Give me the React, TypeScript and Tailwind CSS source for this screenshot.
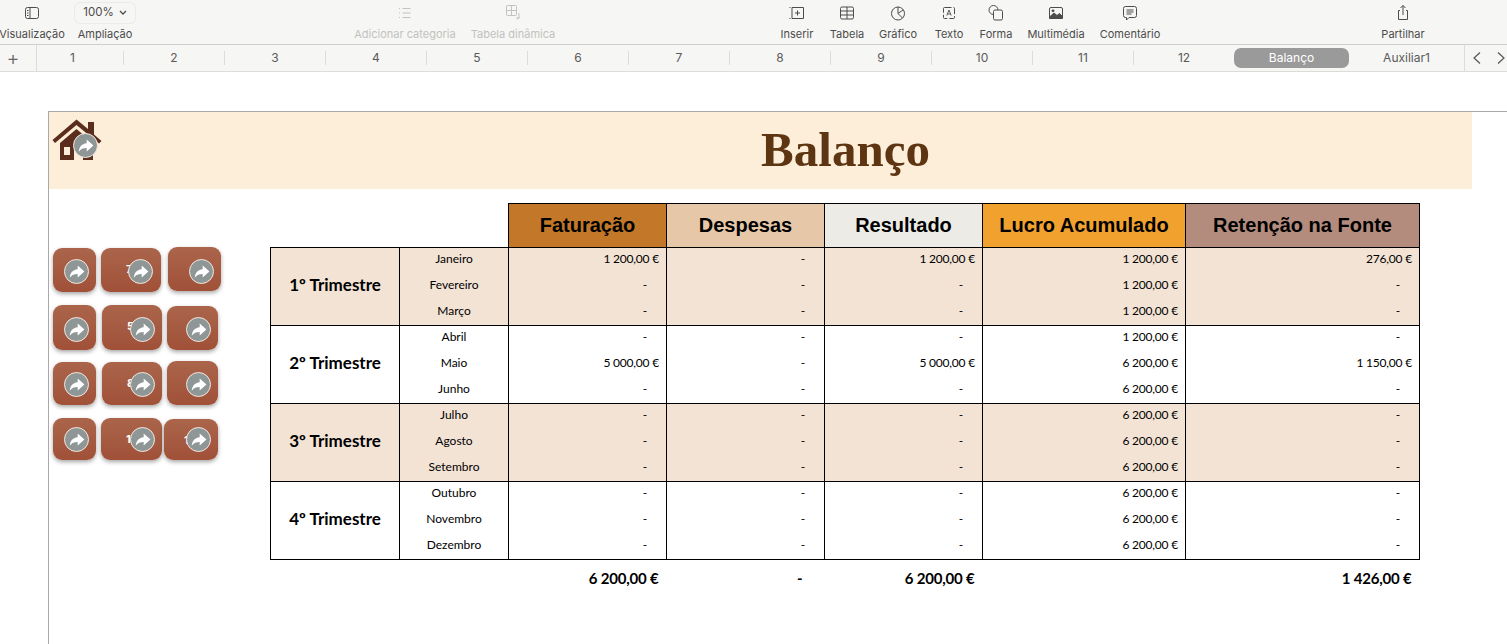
import type { ReactNode } from "react"

const tools1 = [
  { label: "Adicionar categoria", width: 116, icon: <ListIcon /> },
  { label: "Tabela dinâmica", width: 100, icon: <PivotIcon /> },
]

const tools2 = [
  { label: "Inserir", width: 50, icon: <InsertIcon /> },
  { label: "Tabela", width: 50, icon: <TableIcon /> },
  { label: "Gráfico", width: 52, icon: <ChartIcon /> },
  { label: "Texto", width: 50, icon: <TextIcon /> },
  { label: "Forma", width: 44, icon: <ShapeIcon /> },
  { label: "Multimédia", width: 76, icon: <MediaIcon /> },
  { label: "Comentário", width: 72, icon: <CommentIcon /> },
]

const tabs = ["2", "3", "4", "5", "6", "7", "8", "9", "10", "11"]

const quarters = [
  {
    name: "1º Trimestre",
    shaded: true,
    rows: [
      ["Janeiro", "1 200,00 €", "-", "1 200,00 €", "1 200,00 €", "276,00 €"],
      ["Fevereiro", "-", "-", "-", "1 200,00 €", "-"],
      ["Março", "-", "-", "-", "1 200,00 €", "-"],
    ],
  },
  {
    name: "2º Trimestre",
    shaded: false,
    rows: [
      ["Abril", "-", "-", "-", "1 200,00 €", "-"],
      ["Maio", "5 000,00 €", "-", "5 000,00 €", "6 200,00 €", "1 150,00 €"],
      ["Junho", "-", "-", "-", "6 200,00 €", "-"],
    ],
  },
  {
    name: "3º Trimestre",
    shaded: true,
    rows: [
      ["Julho", "-", "-", "-", "6 200,00 €", "-"],
      ["Agosto", "-", "-", "-", "6 200,00 €", "-"],
      ["Setembro", "-", "-", "-", "6 200,00 €", "-"],
    ],
  },
  {
    name: "4º Trimestre",
    shaded: false,
    rows: [
      ["Outubro", "-", "-", "-", "6 200,00 €", "-"],
      ["Novembro", "-", "-", "-", "6 200,00 €", "-"],
      ["Dezembro", "-", "-", "-", "6 200,00 €", "-"],
    ],
  },
]

function Svg({ children }: { children: ReactNode }) {
  return (
    <svg width="18" height="18" viewBox="0 0 18 18" fill="none" stroke="currentColor" strokeWidth="1">
      {children}
    </svg>
  )
}

function SidebarIcon() {
  return (
    <Svg>
      <rect x="2.5" y="3.5" width="13" height="11" rx="2" />
      <path d="M7 3.5v11M4 6.5h1.5M4 9h1.5M4 11.5h1.5" />
    </Svg>
  )
}

function ListIcon() {
  return (
    <Svg>
      <path d="M6.5 4.5h8M6.5 9h8M6.5 13.5h8" />
      <path d="M3 4.5h1M3 9h1M3 13.5h1" />
    </Svg>
  )
}

function PivotIcon() {
  return (
    <Svg>
      <rect x="2.5" y="1.5" width="10" height="10" rx="1" />
      <path d="M7.5 1.5v10M2.5 6.5h10M15 9v5h-3M13.5 15.5 15.5 13.5" />
    </Svg>
  )
}

function InsertIcon() {
  return (
    <Svg>
      <path d="M4 3.5h11.5v11H4z" />
      <path d="M9.5 6.5v5M7 9h5M1.5 3.5h1M1.5 14.5h1" />
    </Svg>
  )
}

function TableIcon() {
  return (
    <Svg>
      <rect x="2.5" y="3" width="13" height="12" rx="1.5" />
      <path d="M2.5 7h13M2.5 11h13M9 3v12" />
    </Svg>
  )
}

function ChartIcon() {
  return (
    <Svg>
      <circle cx="9" cy="9.500" r="6.500" />
      <path d="M9 3v6.500l4.500 4.500M9 9.500 14 6" />
    </Svg>
  )
}

function TextIcon() {
  return (
    <Svg>
      <rect x="3.5" y="3.5" width="11" height="11" rx="1" strokeDasharray="7 2" />
      <path d="M6.8 11.5 9 6l2.2 5.5M7.6 10h2.8" strokeWidth="0.9" />
    </Svg>
  )
}

function ShapeIcon() {
  return (
    <Svg>
      <circle cx="6.5" cy="6" r="4.5" />
      <rect x="6.5" y="6" width="9" height="10" rx="1.5" fill="#f6f6f4" />
    </Svg>
  )
}

function MediaIcon() {
  return (
    <Svg>
      <rect x="2.5" y="3.5" width="13" height="11" rx="1.5" />
      <circle cx="6" cy="6.8" r="1" fill="currentColor" />
      <path d="M2.5 13 7 9l3 2.5 2.5-2 3 3V14.5h-13z" fill="currentColor" />
    </Svg>
  )
}

function CommentIcon() {
  return (
    <Svg>
      <path d="M4.5 2.5h9a2 2 0 0 1 2 2v7a2 2 0 0 1-2 2H8l-2.5 2.5V13.500h-1a2 2 0 0 1-2-2v-7a2 2 0 0 1 2-2z" />
      <path d="M5.500 6h7M5.500 8h7M5.500 10h5" />
    </Svg>
  )
}

function ShareIcon() {
  return (
    <Svg>
      <path d="M6 6.500H4.500v9h9v-9H12M9 11V1.500M6.500 4 9 1.500 11.500 4" />
    </Svg>
  )
}

function ToolItem({ label, width, icon, muted }: { label: string; width: number; icon: ReactNode; muted?: boolean }) {
  return (
    <div
      className={`flex flex-col items-center ${muted ? "text-[#c2c2c0]" : "text-[#4c4c4c]"}`}
      style={{ width }}
    >
      <div className="h-[18px] mt-[4px]">{icon}</div>
      <span className="mt-[5px] text-[11px] leading-[14px] whitespace-nowrap">{label}</span>
    </div>
  )
}

function GoCircle({ className }: { className: string }) {
  return (
    <div
      className={`absolute w-[25px] h-[25px] rounded-full bg-[#8f9696] border border-[#f3e7e0] flex items-center justify-center ${className}`}
    >
      <svg width="19" height="19" viewBox="0 0 24 24" fill="#ffffff">
        <path d="M13.500 4.500 22 12l-8.500 7.500V15c-4.500 0-7.500 1.200-10 5 .3-6 3.500-10.200 10-11z" />
      </svg>
    </div>
  )
}

function NavButton({
  className,
  circle,
  hint,
  hintAt,
}: {
  className: string
  circle: string
  hint?: string
  hintAt?: string
}) {
  return (
    <div
      className={`relative shrink-0 rounded-[9px] bg-gradient-to-b from-[#aa654b] to-[#a05138] shadow-[0_2px_4px_rgba(0,0,0,0.35)] ${className}`}
    >
      {hint && (
        <span className={`absolute top-[16px] text-[11px] font-bold text-white leading-none ${hintAt}`}>{hint}</span>
      )}
      <GoCircle className={circle} />
    </div>
  )
}

function HomeIcon() {
  return (
    <svg width="50" height="44" viewBox="0 0 50 44" fill="#5a2d1c">
      <path d="M0.500 22 24.500 1.500 36 11V4h6v12.500L49.500 23l-2.500 2.500L24.500 7 3 25z" />
      <path d="M8 25 24.500 11 41 25v17H31V29h-9v13H8zM12 29v8h6v-8z" fillRule="evenodd" />
    </svg>
  )
}

function ChevronLeft() {
  return (
    <svg width="10" height="14" viewBox="0 0 10 14" fill="none" stroke="#555555" strokeWidth="1.200">
      <path d="M8 1.500 2 7l6 5.500" />
    </svg>
  )
}

function ChevronRight() {
  return (
    <svg width="10" height="14" viewBox="0 0 10 14" fill="none" stroke="#555555" strokeWidth="1.200">
      <path d="m2 1.500 6 5.500-6 5.500" />
    </svg>
  )
}

function Amount({ value }: { value: string }) {
  const isDash = value === "-"
  return (
    <td
      className={`border-r border-black text-right text-[12px] leading-[16px] pb-[3px] tracking-[-0.2px] ${
        isDash ? "pr-[19px]" : "pr-[7px]"
      }`}
    >
      {value}
    </td>
  )
}

export default function App() {
  return (
    <div className="h-[644px] w-[1507px] overflow-hidden bg-white font-['Inter',sans-serif]">
      {/* toolbar */}
      <div className="h-[45px] bg-[#f6f6f4] border-b border-[#cfcfcd] flex items-start">
        <div className="w-[64px]">
          <ToolItem label="Visualização" width={64} icon={<SidebarIcon />} />
        </div>
        <div className="ml-[10px] w-[62px] flex flex-col items-center text-[#4c4c4c]">
          <div className="mt-[2px] h-[22px] w-[62px] rounded-[6px] border border-[#ebebe9] flex items-center justify-center gap-[5px] text-[11.500px]">
            100%
            <svg width="8" height="6" viewBox="0 0 8 6" fill="none" stroke="#4c4c4c" strokeWidth="1.300">
              <path d="m1 1 3 3 3-3" />
            </svg>
          </div>
          <span className="mt-[3px] text-[11px] leading-[14px] whitespace-nowrap">Ampliação</span>
        </div>
        <div className="ml-[211px] flex">
          {tools1.map((t) => (
            <ToolItem key={t.label} {...t} muted />
          ))}
        </div>
        <div className="ml-[209px] flex">
          {tools2.map((t) => (
            <ToolItem key={t.label} {...t} />
          ))}
        </div>
        <div className="ml-[207px]">
          <ToolItem label="Partilhar" width={60} icon={<ShareIcon />} />
        </div>
      </div>

      {/* sheet tabs */}
      <div className="h-[27px] bg-[#f6f6f4] border-b border-[#dcdcda] flex items-center text-[12px] text-[#5a5a5a]">
        <div className="w-[37px] h-full pr-[10px] border-r border-[#dcdcda] flex items-center justify-center text-[20px] font-light text-[#666666]">
          +
        </div>
        <div className="w-[87px] pr-[15px] text-center border-r border-[#dcdcda] h-[14px] leading-[14px]">1</div>
        {tabs.map((t) => (
          <div key={t} className="w-[101px] text-center border-r border-[#dcdcda] h-[14px] leading-[14px]">
            {t}
          </div>
        ))}
        <div className="w-[100px] text-center">12</div>
        <div className="w-[115px] h-[20px] rounded-[7px] bg-[#9a9a9a] text-white flex items-center justify-center">
          Balanço
        </div>
        <div className="w-[115px] text-center">Auxiliar1</div>
        <div className="h-full border-l border-[#dcdcda] flex items-center gap-[14px] pl-[7px]">
          <ChevronLeft />
          <ChevronRight />
        </div>
      </div>

      {/* canvas */}
      <div className="pt-[39px] pl-[48px]">
        <div className="h-[600px] border-t border-l border-[#a9a9a9]">
          <div className="relative h-[77px] w-[1423px] bg-[#fdeed9] flex items-center justify-center pl-[170px] pb-[2px]">
            <div className="absolute left-[3px] top-[6px]">
              <HomeIcon />
            </div>
            <GoCircle className="left-[24px] top-[21px]" />
            <h1 className="font-['Liberation_Serif',serif] font-bold text-[49px] leading-none text-[#5e3512]">
              Balanço
            </h1>
          </div>

          <div className="flex pt-[14px]">
            <div className="w-[221px] shrink-0 pt-[44px] pl-[4px] flex flex-col">
              <div className="flex h-[58px] items-start">
                <NavButton className="w-[43px] h-[44px] mt-[1px]" circle="left-[11px] top-[11px]" />
                <NavButton
                  className="ml-[5px] w-[60px] h-[44px] mt-[1px]"
                  circle="left-[27px] top-[11px]"
                  hint="7"
                  hintAt="left-[25px]"
                />
                <NavButton className="ml-[7px] w-[53px] h-[44px]" circle="left-[21px] top-[12px]" />
              </div>
              <div className="flex h-[57px] items-start">
                <NavButton className="w-[43px] h-[45px]" circle="left-[11px] top-[12px]" />
                <NavButton
                  className="ml-[6px] w-[60px] h-[45px]"
                  circle="left-[28px] top-[12px]"
                  hint="5"
                  hintAt="left-[25px]"
                />
                <NavButton className="ml-[5px] w-[51px] h-[44px] mt-[1px]" circle="left-[19px] top-[11px]" />
              </div>
              <div className="flex h-[56px] items-start">
                <NavButton className="w-[43px] h-[43px]" circle="left-[11px] top-[10px]" />
                <NavButton
                  className="ml-[6px] w-[60px] h-[43px]"
                  circle="left-[28px] top-[10px]"
                  hint="8"
                  hintAt="left-[25px]"
                />
                <NavButton className="ml-[5px] w-[51px] h-[44px] -mt-[1px]" circle="left-[19px] top-[11px]" />
              </div>
              <div className="flex items-start">
                <NavButton className="w-[43px] h-[42px]" circle="left-[11px] top-[9px]" />
                <NavButton
                  className="ml-[5px] w-[61px] h-[42px]"
                  circle="left-[29px] top-[9px]"
                  hint="1"
                  hintAt="left-[25px]"
                />
                <NavButton
                  className="ml-[2px] w-[54px] h-[41px] mt-[1px]"
                  circle="left-[22px] top-[8px]"
                  hint="1"
                  hintAt="left-[20px]"
                />
              </div>
            </div>

            <table className="table-fixed border-collapse w-[1149px] font-['Lato',sans-serif] text-black">
              <colgroup>
                <col className="w-[129px]" />
                <col className="w-[109px]" />
                <col className="w-[158px]" />
                <col className="w-[158px]" />
                <col className="w-[158px]" />
                <col className="w-[203px]" />
                <col className="w-[234px]" />
              </colgroup>
              <thead>
                <tr className="h-[44px] font-['Liberation_Sans',sans-serif] text-[20px] font-bold">
                  <th colSpan={2} />
                  <th className="border border-black bg-[#c27828] pb-[2px]">Faturação</th>
                  <th className="border border-black bg-[#e6c7a8] pb-[2px]">Despesas</th>
                  <th className="border border-black bg-[#ecebe6] pb-[2px]">Resultado</th>
                  <th className="border border-black bg-[#f1a22e] pb-[2px]">Lucro Acumulado</th>
                  <th className="border border-black bg-[#b48c7e] pb-[2px]">Retenção na Fonte</th>
                </tr>
              </thead>
              <tbody>
                {quarters.flatMap((q) =>
                  q.rows.map((row, i) => (
                    <tr
                      key={row[0]}
                      className={`h-[26px] ${q.shaded ? "bg-[#f3e3d5]" : "bg-white"} ${
                        i === 2 ? "border-b border-black" : ""
                      } ${i === 0 ? "border-t border-black" : ""}`}
                    >
                      {i === 0 && (
                        <td rowSpan={3} className="border border-black text-center text-[17px] font-bold pb-[4px]">
                          {q.name}
                        </td>
                      )}
                      <td className="border-r border-black text-center text-[12px] leading-[16px] pb-[3px]">
                        {row[0]}
                      </td>
                      {row.slice(1).map((v, j) => (
                        <Amount key={j} value={v} />
                      ))}
                    </tr>
                  ))
                )}
                <tr className="h-[36px] text-[15px] font-bold tracking-[-0.2px]">
                  <td colSpan={2} />
                  <td className="text-right pr-[8px]">6 200,00 €</td>
                  <td className="text-right pr-[22px]">-</td>
                  <td className="text-right pr-[8px]">6 200,00 €</td>
                  <td />
                  <td className="text-right pr-[8px]">1 426,00 €</td>
                </tr>
              </tbody>
            </table>
          </div>
        </div>
      </div>
    </div>
  )
}
